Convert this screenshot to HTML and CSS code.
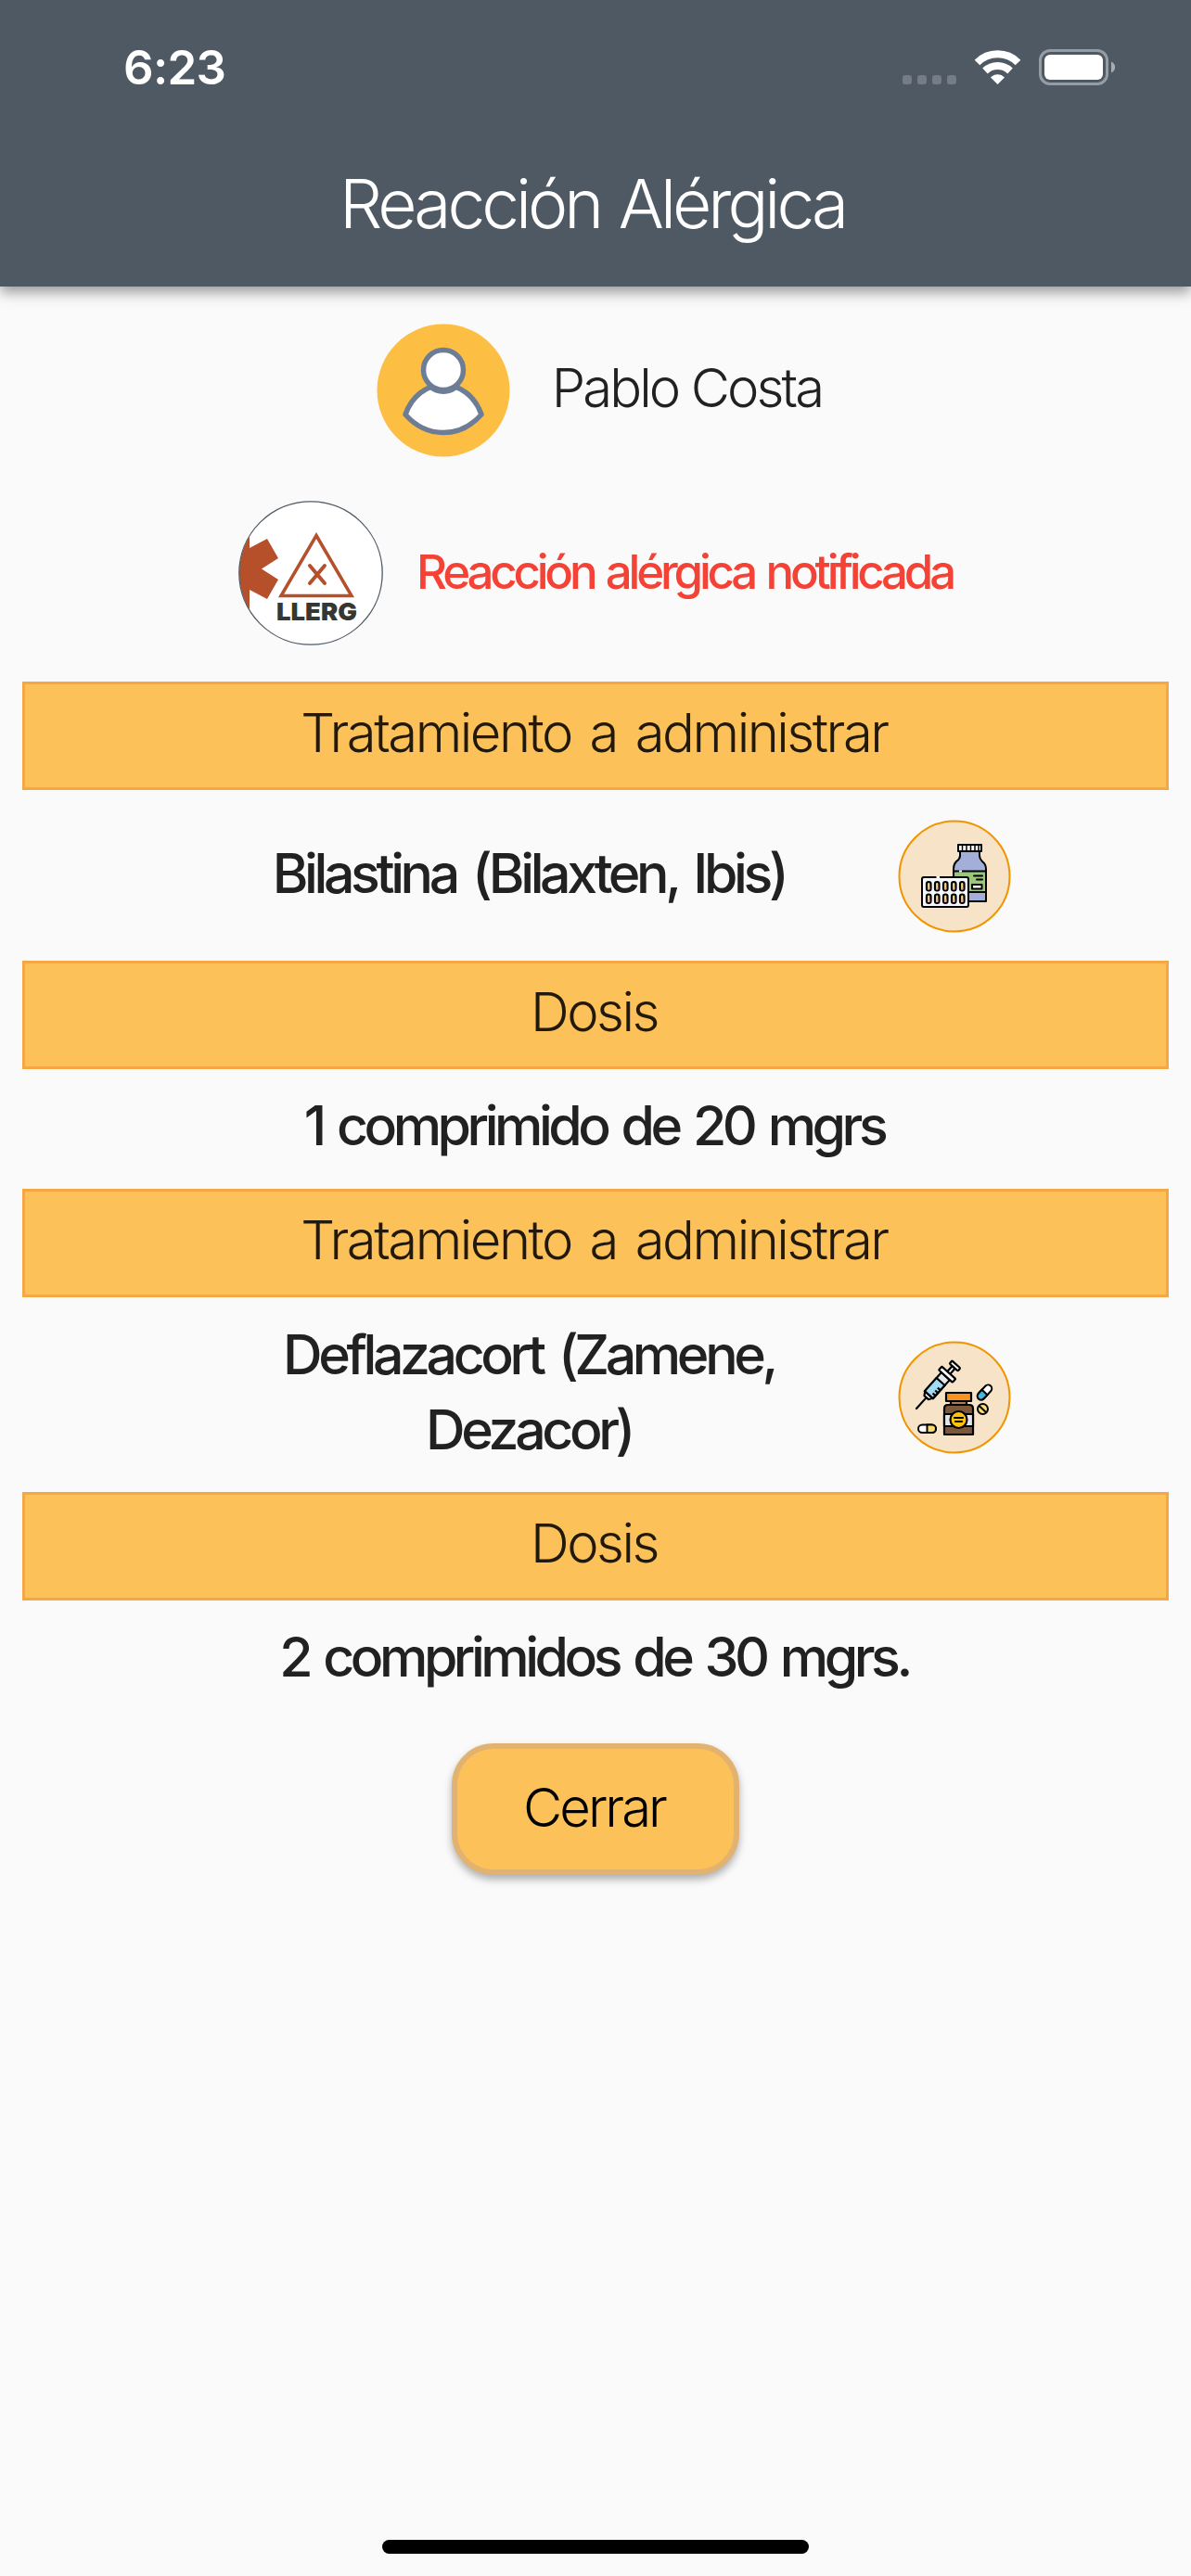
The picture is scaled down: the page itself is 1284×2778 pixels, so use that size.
FILE: index.html
```html
<!DOCTYPE html>
<html lang="es">
<head>
    <meta charset="UTF-8">
    <meta name="viewport" content="width=device-width, initial-scale=1.0">
    <title>Reacción Alérgica</title>
    <link rel="stylesheet" href="styles.css">
</head>
<body>

    <!-- Status bar and title -->
    <header class="app-bar">
        <div class="status-bar">
            <span class="clock">6:23</span>
            <svg class="status-icons" viewBox="0 0 230 42" width="230" height="42">
                <g fill="#737c87">
                    <rect x="0" y="29" width="10" height="10" rx="3"/>
                    <rect x="16" y="29" width="10" height="10" rx="3"/>
                    <rect x="32" y="29" width="10" height="10" rx="3"/>
                    <rect x="48" y="29" width="10" height="10" rx="3"/>
                </g>
                <g fill="none" stroke="#fff" stroke-width="8">
                    <path d="M80.500 15.500 A31 31 0 0 1 124.500 15.500"/>
                    <path d="M89 24.500 A19.500 19.500 0 0 1 116 24.500"/>
                </g>
                <path d="M95 31.500 C99 27 106 27 110 31.500 L102.500 39 Z" fill="#fff"/>
                <rect x="148.500" y="2.500" width="72" height="36" rx="10.500" fill="none" stroke="#969ca4" stroke-width="3"/>
                <rect x="153" y="7" width="63" height="27" rx="6" fill="#fff"/>
                <path d="M225 14.500 C230.500 17 230.500 24 225 26.500 Z" fill="#a7adb3"/>
            </svg>
        </div>
        <h1 class="title">Reacción Alérgica</h1>
    </header>

    <!-- Main content -->
    <main class="content">
        <div class="patient">
            <svg class="avatar" viewBox="0 0 144 144" width="144" height="144">
                <circle cx="72" cy="72" r="71.500" fill="#fdbe44"/>
                <g fill="#fff" stroke="#6c7d95" stroke-width="5.500">
                    <path d="M31 98 C38 78 54 66 72 66 C90 66 106 78 113 98 C90 124 54 124 31 98 Z" stroke-linejoin="round"/>
                    <circle cx="72" cy="50" r="21.500"/>
                    <path d="M58 68 C66 75 78 75 86 68" fill="none"/>
                </g>
            </svg>
            <span class="patient-name">Pablo Costa</span>
        </div>

        <div class="alert">
            <svg class="allergy" viewBox="0 0 156 156" width="156" height="156">
                <defs>
                    <clipPath id="badge"><circle cx="78" cy="78" r="77"/></clipPath>
                </defs>
                <circle cx="78" cy="78" r="77.200" fill="#fff"/>
                <path clip-path="url(#badge)" d="M0 30 H12 V51 L31 41 L43 62 L25 73.500 L43 85 L31 106 L12 96 V130 H0 Z" fill="#b5502b"/>
                <circle cx="78" cy="78" r="77.200" fill="none" stroke="#4f5964" stroke-width="1.300"/>
                <path d="M84 37.500 L122 102.500 H46 Z" fill="none" stroke="#b5502b" stroke-width="3.500"/>
                <path d="M77 70 L93 89 M93 70 L77 89" stroke="#b5502b" stroke-width="4" stroke-linecap="round"/>
                <text class="badge-text" x="41" y="129" textLength="87" lengthAdjust="spacingAndGlyphs">LLERG</text>
            </svg>
            <span class="alert-text">Reacción alérgica notificada</span>
        </div>

        <h2 class="bar">Tratamiento a administrar</h2>
        <div class="drug">
            <p class="drug-name">Bilastina (Bilaxten, Ibis)</p>
            <svg class="drug-icon" viewBox="0 0 122 122" width="122" height="122">
                <circle cx="61" cy="61" r="59.500" fill="#f6e3c8" stroke="#f29400" stroke-width="2"/>
                <g stroke="#000" stroke-width="2" stroke-linejoin="round">
                    <path d="M67 34 V39 Q67 42 63 45 Q60 48 60 53 V88 H95 V53 Q95 48 91 45 Q88 42 88 39 V34 Z" fill="#a3aed9"/>
                    <path d="M60 55.500 H95 V78 H60 Z" fill="#99c77c"/>
                    <rect x="65" y="27" width="25" height="7" fill="#fff"/>
                    <path d="M69.500 28 V33 M74 28 V33 M78.500 28 V33 M83 28 V33 M87 28 V33" stroke-width="1.500"/>
                    <path d="M82 60.500 H91 M85 64.500 H91" stroke-linecap="round"/>
                    <rect x="80" y="70" width="10.500" height="4.500" fill="#fff"/>
                    <rect x="26" y="62" width="50" height="32" rx="2" fill="#f4f8fc"/>
                </g>
                <path d="M41.500 62 H45 M66 55.500 H69" stroke="#f4f8fc" stroke-width="2.200"/>
                <g fill="#f3dc83" stroke="#000" stroke-width="2.200">
                    <rect x="31" y="67" width="4.500" height="9.500" rx="2.200"/>
                    <rect x="40" y="67" width="4.500" height="9.500" rx="2.200"/>
                    <rect x="49" y="67" width="4.500" height="9.500" rx="2.200"/>
                    <rect x="58" y="67" width="4.500" height="9.500" rx="2.200"/>
                    <rect x="67" y="67" width="4.500" height="9.500" rx="2.200"/>
                    <rect x="31" y="80.500" width="4.500" height="9.500" rx="2.200"/>
                    <rect x="40" y="80.500" width="4.500" height="9.500" rx="2.200"/>
                    <rect x="49" y="80.500" width="4.500" height="9.500" rx="2.200"/>
                    <rect x="58" y="80.500" width="4.500" height="9.500" rx="2.200"/>
                    <rect x="67" y="80.500" width="4.500" height="9.500" rx="2.200"/>
                </g>
                <path d="M33.250 73 V75.500 M42.250 73 V75.500 M51.250 73 V75.500 M60.250 73 V75.500 M69.250 73 V75.500 M33.250 86 V89 M42.250 86 V89 M51.250 86 V89 M60.250 86 V89 M69.250 86 V89" stroke="#e9a6a8" stroke-width="2.300"/>
            </svg>
        </div>

        <h2 class="bar">Dosis</h2>
        <p class="dose">1 comprimido de 20 mgrs</p>

        <h2 class="bar">Tratamiento a administrar</h2>
        <div class="drug drug-tall">
            <p class="drug-name">Deflazacort (Zamene, Dezacor)</p>
            <svg class="drug-icon" viewBox="0 0 122 122" width="122" height="122">
                <circle cx="61" cy="61" r="59.500" fill="#f6e3c8" stroke="#f29400" stroke-width="2"/>
                <!-- syringe -->
                <g transform="translate(20 73) rotate(-48)" stroke="#000" stroke-width="2.200" stroke-linejoin="round">
                    <path d="M0 0 H17" stroke-linecap="round"/>
                    <path d="M16 -3 L20 -5.500 V5.500 L16 3 Z" fill="#fff"/>
                    <rect x="20" y="-6" width="27" height="12" fill="#e3e6ea"/>
                    <rect x="20" y="-6" width="19" height="12" fill="#a3dbf5"/>
                    <path d="M24 2 V6 M28 2 V6 M32 2 V6"/>
                    <path d="M51 -2 H60 V2 H51 Z" fill="#fff"/>
                    <rect x="47" y="-10" width="5" height="20" rx="1" fill="#fff"/>
                    <rect x="60" y="-6" width="4" height="12" rx="1" fill="#fff"/>
                </g>
                <!-- bottle -->
                <g stroke="#000" stroke-width="2.200" stroke-linejoin="round">
                    <path d="M57 64 H74 V70 H57 Z" fill="#a97a5c"/>
                    <rect x="52" y="56" width="27" height="9" fill="#f7931e"/>
                    <path d="M50 101 V73 Q50 69 54 69 H77 Q81 69 81 73 V101 Z" fill="#7d573a"/>
                    <path d="M50 79 H81 V92 H50 Z" fill="#e3e6ea"/>
                    <circle cx="65.500" cy="85" r="9" fill="#fec10d"/>
                    <path d="M61 83 H70 M62 87 H69" stroke-linecap="round"/>
                </g>
                <!-- pills -->
                <g stroke="#000" stroke-width="2">
                    <g transform="translate(93.500 55.500) rotate(-47)">
                        <rect x="-9.500" y="-4" width="19" height="8" rx="4" fill="#fff"/>
                        <path d="M0 -4 H-5.500 A4 4 0 0 0 -5.500 4 H0 Z" fill="#3fb9df"/>
                    </g>
                    <circle cx="91.500" cy="73.500" r="5.500" fill="#fadb6f"/>
                    <path d="M87.500 70 L95 77"/>
                    <rect x="22" y="90.500" width="19" height="8.500" rx="4.250" fill="#fff"/>
                    <path d="M31.500 90.500 H36.750 A4.250 4.250 0 0 1 36.750 99 H31.500 Z" fill="#fadb6f"/>
                </g>
            </svg>
        </div>

        <h2 class="bar">Dosis</h2>
        <p class="dose">2 comprimidos de 30 mgrs.</p>

        <button class="close">Cerrar</button>
    </main>

    <div class="home-indicator"></div>

</body>
</html>
```
FILE: styles.css
```css
* {
    box-sizing: border-box;
}
body {
    font-family: Inter, "Open Sans", sans-serif;
    font-weight: 260;
    margin: 0;
    height: 2778px;
    display: flex;
    flex-direction: column;
    background-color: #fafafa;
    color: #212121;
}
h1, h2, p {
    margin: 0;
    font-weight: inherit;
}
.app-bar {
    height: 309px;
    flex: none;
    background-color: #4f5963;
    color: #fff;
    box-shadow: 0 6px 14px rgba(0, 0, 0, 0.4);
}
.status-bar {
    height: 141px;
    padding: 4px 81px 0 133px;
    display: flex;
    align-items: center;
    justify-content: space-between;
}
.clock {
    font-size: 51px;
    font-weight: 600;
    letter-spacing: -0.7px;
}
.title {
    padding-right: 7px;
    font-size: 73px;
    font-weight: 300;
    line-height: 158px;
    letter-spacing: -4px;
    word-spacing: 3px;
    text-align: center;
}
.content {
    flex: 1;
    padding: 40px 24px 0;
    display: flex;
    flex-direction: column;
}
.patient {
    height: 144px;
    padding-left: 8px;
    display: flex;
    align-items: center;
    justify-content: center;
    gap: 45px;
}
.patient-name {
    padding-bottom: 7px;
    font-size: 58px;
    letter-spacing: -2.9px;
}
.alert {
    height: 156px;
    margin: 47px 0 39px;
    display: flex;
    align-items: center;
    justify-content: center;
    gap: 36px;
}
.alert-text {
    padding-bottom: 4px;
    font-size: 51px;
    font-weight: 510;
    letter-spacing: -4.2px;
    word-spacing: 3px;
    color: #f44336;
}
.badge-text {
    font-size: 26px;
    font-weight: 900;
    fill: #363732;
}
.bar {
    height: 117px;
    flex: none;
    padding-right: 3px;
    border: 3px solid #f4a742;
    background-color: #fcc159;
    color: #21190c;
    font-size: 58px;
    line-height: 105px;
    letter-spacing: -2.5px;
    word-spacing: 6px;
    text-align: center;
}
.drug {
    height: 184px;
    padding-left: 56px;
    display: flex;
    align-items: center;
    justify-content: center;
    gap: 78px;
}
.drug-tall {
    height: 210px;
}
.drug-name {
    width: 640px;
    padding-bottom: 6px;
    font-size: 59px;
    font-weight: 510;
    line-height: 81px;
    letter-spacing: -4.4px;
    word-spacing: 6px;
    text-align: center;
}
.drug-icon {
    flex: none;
    margin-top: 2px;
}
.drug-tall .drug-icon {
    margin-top: 6px;
}
.dose {
    height: 129px;
    padding-right: 3px;
    font-size: 59px;
    font-weight: 510;
    line-height: 122px;
    letter-spacing: -4.5px;
    word-spacing: 4px;
    text-align: center;
}
.close {
    width: 310px;
    height: 142px;
    margin: 25px auto 0;
    padding: 0 3px 4px 0;
    border: 6px solid #e2b370;
    border-radius: 45px;
    background-color: #fcc159;
    box-shadow: 0 5px 8px rgba(0, 0, 0, 0.3);
    color: #000;
    font-family: inherit;
    font-size: 58px;
    font-weight: 260;
    letter-spacing: -3px;
}
.home-indicator {
    width: 460px;
    height: 15px;
    margin: 0 auto 24px;
    border-radius: 8px;
    background-color: #000;
}
```
